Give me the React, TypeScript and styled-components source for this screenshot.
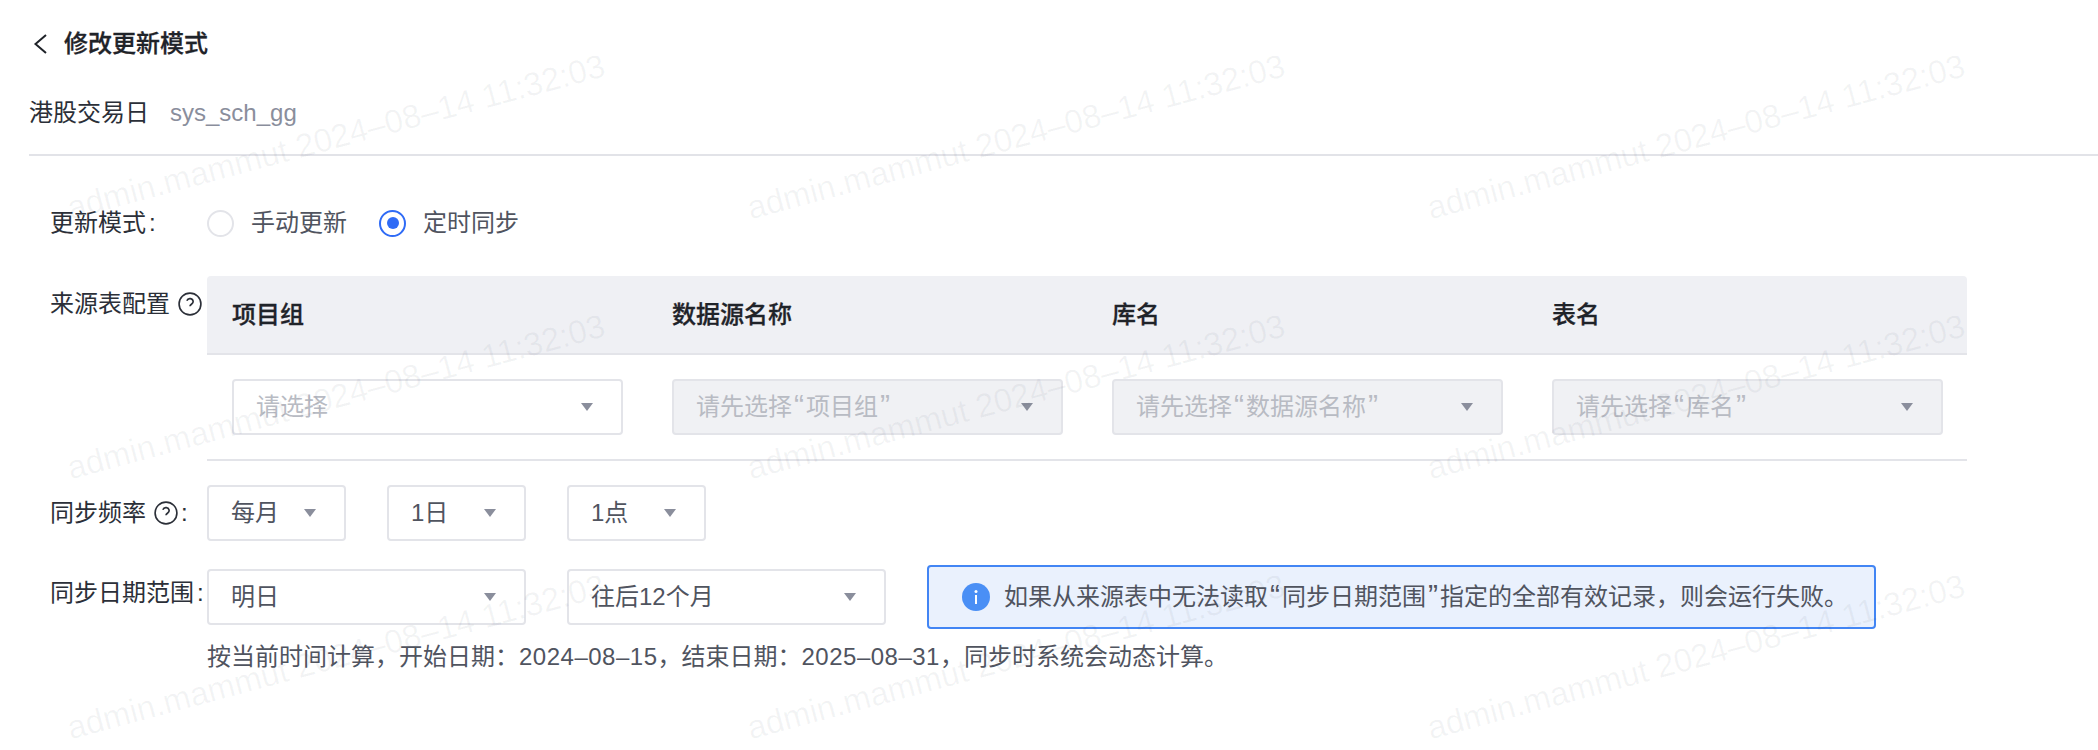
import React from "react";
import styled, { createGlobalStyle } from "styled-components";

const GlobalStyle = createGlobalStyle`
  html, body {
    margin: 0;
    background: #fff;
  }
  body {
    font-family: "Liberation Sans", "Noto Sans CJK SC", sans-serif;
    font-size: 24px;
    line-height: 32px;
    color: #2b2f38;
  }
`;

// ------------------- Page -------------------

const Page = styled.div`
  position: relative;
  width: 2098px;
  height: 750px;
  overflow: hidden;
  padding: 28px 0 0 29px;
  box-sizing: border-box;
`;

const TitleRow = styled.div`
  display: flex;
  align-items: center;
  height: 32px;
  gap: 16px;
  margin-left: 4px;
`;

const Title = styled.h1`
  margin: 0;
  font-size: 24px;
  line-height: 32px;
  font-weight: 500;
  color: #1f2329;
  -webkit-text-stroke: 0.3px #1f2329;
`;

const MetaRow = styled.div`
  display: flex;
  align-items: center;
  height: 32px;
  gap: 21px;
  margin-top: 37px;
`;

const MetaName = styled.span`
  color: #2b2f38;
`;

const MetaCode = styled.span`
  color: #8a8e9c;
`;

const Divider = styled.div`
  height: 2px;
  margin-top: 25px;
  background: #e2e3e8;
`;

const Form = styled.div`
  padding: 39px 0 0 21px;
`;

const FormRow = styled.div<{ $gap?: number }>`
  display: flex;
  align-items: flex-start;
  margin-top: ${(p) => p.$gap ?? 0}px;
`;

const Label = styled.div`
  display: flex;
  align-items: center;
  gap: 8px;
  flex: 0 0 157px;
  width: 157px;
  height: 32px;
  padding-top: 12px;
  white-space: nowrap;
  color: #2b2f38;
`;

const Colon = styled.span`
  margin-left: -5px;
`;

const Quote = styled.span`
  margin: 0 2px;
  font-size: 30px;
  line-height: 0;
`;

const DateText = styled.span`
  letter-spacing: 0.5px;
`;

// ------------------- Radios -------------------

const RadioGroup = styled.div`
  display: flex;
  align-items: center;
  height: 56px;
  gap: 32px;
`;

const RadioItem = styled.label`
  display: flex;
  align-items: center;
  gap: 17px;
  color: #50545f;
`;

const RadioMark = styled.span<{ $checked?: boolean }>`
  display: flex;
  align-items: center;
  justify-content: center;
  width: 27px;
  height: 27px;
  box-sizing: border-box;
  border-radius: 50%;
  border: 2px solid ${(p) => (p.$checked ? "#2f6bf6" : "#e3e4e9")};
  &::after {
    content: "";
    display: ${(p) => (p.$checked ? "block" : "none")};
    width: 12px;
    height: 12px;
    border-radius: 50%;
    background: #2f6bf6;
  }
`;

// ------------------- Table -------------------

const Table = styled.div`
  width: 1760px;
  border-bottom: 2px solid #e3e4e9;
`;

const TableGrid = styled.div`
  display: grid;
  grid-template-columns: repeat(4, 1fr);
`;

const TableHead = styled(TableGrid)`
  height: 79px;
  box-sizing: border-box;
  background: #eff0f4;
  border-bottom: 2px solid #e3e4e9;
  border-radius: 4px 4px 0 0;
`;

const HeadCell = styled.div`
  display: flex;
  align-items: center;
  padding-left: 25px;
  font-weight: 500;
  color: #1f2329;
  -webkit-text-stroke: 0.3px #1f2329;
`;

const BodyCell = styled.div`
  padding: 24px 24px 24px 25px;
`;

// ------------------- Selects -------------------

const Select = styled.div<{ $width?: number; $disabled?: boolean }>`
  display: flex;
  align-items: center;
  justify-content: space-between;
  box-sizing: border-box;
  width: ${(p) => (p.$width ? `${p.$width}px` : "100%")};
  height: 56px;
  padding: 0 28px 0 22px;
  border: 2px solid #e3e4e9;
  border-radius: 4px;
  background: ${(p) => (p.$disabled ? "#f0f1f4" : "transparent")};
`;

const SelectText = styled.span<{ $placeholder?: boolean }>`
  color: ${(p) => (p.$placeholder ? "#b8bbc3" : "#50545f")};
  white-space: nowrap;
`;

const Controls = styled.div`
  display: flex;
  align-items: center;
  gap: 41px;
`;

const DateControls = styled(Controls)`
  height: 64px;
`;

// ------------------- Notice -------------------

const Notice = styled.div`
  display: flex;
  align-items: center;
  gap: 14px;
  box-sizing: border-box;
  width: 949px;
  height: 64px;
  padding-left: 33px;
  border: 2px solid #4285f4;
  border-radius: 4px;
  background: #eaf1fd;
  color: #50545f;
  white-space: nowrap;
`;

const NoticeText = styled.span``;

const HelpText = styled.div`
  margin: 12px 0 0 157px;
  color: #50545f;
  white-space: nowrap;
`;

// ------------------- Watermark -------------------

const Watermark = styled.div`
  position: absolute;
  top: 7px;
  left: -4px;
  display: grid;
  grid-template-columns: repeat(3, 680px);
  grid-auto-rows: 260px;
  pointer-events: none;
`;

const WatermarkCell = styled.div`
  display: flex;
  align-items: center;
  justify-content: center;
  font-size: 33px;
  color: rgba(60, 65, 90, 0.06);
  white-space: nowrap;
  transform: rotate(-15deg);
`;

const Arrow = () => (
  <svg width="12" height="8" viewBox="0 0 12 8">
    <path d="M0 0h12L6 8z" fill="#8a8e9c" />
  </svg>
);

const BackIcon = () => (
  <svg width="15" height="20" viewBox="0 0 15 20" fill="none">
    <path d="M13 1 2.5 10 13 19" stroke="#1f2329" strokeWidth="2" />
  </svg>
);

const InfoIcon = () => (
  <svg width="28" height="28" viewBox="0 0 28 28">
    <circle cx="14" cy="14" r="14" fill="#4a8ff5" />
    <circle cx="14" cy="8.5" r="1.5" fill="#fff" />
    <rect x="13" y="12" width="2" height="9" fill="#fff" />
  </svg>
);

const Help = () => (
  <svg width="24" height="24" viewBox="1 1 22 22" fill="none" stroke="#2b2f38" strokeWidth="1.5">
    <circle cx="12" cy="12" r="10" />
    <path d="M9.1 9a3 3 0 0 1 5.8 1c0 2-2.9 2.4-2.9 4" />
    <path d="M12 17.2v.1" />
  </svg>
);

const quoted = (before: string, inner: string, after = "") => (
  <>
    {before}
    <Quote>“</Quote>
    {inner}
    <Quote>”</Quote>
    {after}
  </>
);

const columns = [
  { title: "项目组", placeholder: <>请选择</>, disabled: false },
  { title: "数据源名称", placeholder: quoted("请先选择", "项目组"), disabled: true },
  { title: "库名", placeholder: quoted("请先选择", "数据源名称"), disabled: true },
  { title: "表名", placeholder: quoted("请先选择", "库名"), disabled: true },
];

function App(): JSX.Element {
  return (
    <Page>
      <GlobalStyle />
      <TitleRow>
        <BackIcon />
        <Title>修改更新模式</Title>
      </TitleRow>
      <MetaRow>
        <MetaName>港股交易日</MetaName>
        <MetaCode>sys_sch_gg</MetaCode>
      </MetaRow>
      <Divider />
      <Form>
        <FormRow>
          <Label>
            更新模式<Colon>:</Colon>
          </Label>
          <RadioGroup>
            <RadioItem>
              <RadioMark />
              手动更新
            </RadioItem>
            <RadioItem>
              <RadioMark $checked />
              定时同步
            </RadioItem>
          </RadioGroup>
        </FormRow>
        <FormRow $gap={25}>
          <Label>
            来源表配置
            <Help />
          </Label>
          <Table>
            <TableHead>
              {columns.map((c) => (
                <HeadCell key={c.title}>{c.title}</HeadCell>
              ))}
            </TableHead>
            <TableGrid>
              {columns.map((c) => (
                <BodyCell key={c.title}>
                  <Select $disabled={c.disabled}>
                    <SelectText $placeholder>{c.placeholder}</SelectText>
                    <Arrow />
                  </Select>
                </BodyCell>
              ))}
            </TableGrid>
          </Table>
        </FormRow>
        <FormRow $gap={24}>
          <Label>
            同步频率
            <Help />
            <Colon>:</Colon>
          </Label>
          <Controls>
            <Select $width={139}>
              <SelectText>每月</SelectText>
              <Arrow />
            </Select>
            <Select $width={139}>
              <SelectText>1日</SelectText>
              <Arrow />
            </Select>
            <Select $width={139}>
              <SelectText>1点</SelectText>
              <Arrow />
            </Select>
          </Controls>
        </FormRow>
        <FormRow $gap={24}>
          <Label>
            同步日期范围<Colon>:</Colon>
          </Label>
          <DateControls>
            <Select $width={319}>
              <SelectText>明日</SelectText>
              <Arrow />
            </Select>
            <Select $width={319}>
              <SelectText>往后12个月</SelectText>
              <Arrow />
            </Select>
            <Notice>
              <InfoIcon />
              <NoticeText>
                {quoted("如果从来源表中无法读取", "同步日期范围", "指定的全部有效记录，则会运行失败。")}
              </NoticeText>
            </Notice>
          </DateControls>
        </FormRow>
        <HelpText>
          按当前时间计算，开始日期：<DateText>2024–08–15</DateText>，结束日期：<DateText>2025–08–31</DateText>，同步时系统会动态计算。
        </HelpText>
      </Form>
      <Watermark>
        {Array.from({ length: 9 }).map((_, i) => (
          <WatermarkCell key={i}>admin.mammut 2024–08–14 11:32:03</WatermarkCell>
        ))}
      </Watermark>
    </Page>
  );
}

export default App;
